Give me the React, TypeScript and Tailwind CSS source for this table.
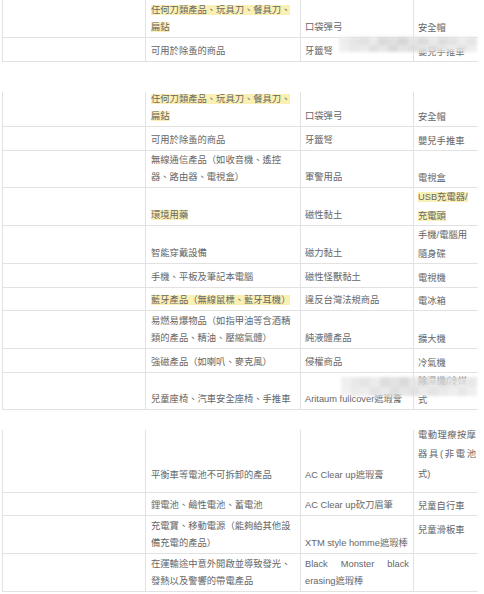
type Cell = { t: string[]; hl?: boolean; top?: boolean; j?: boolean };
type Row = { h: string; c: [Cell, Cell, Cell]; pb?: string; pb4?: string; lh4?: string };

const snippetOne: Row[] = [
  {
    h: 'h-[38px]',
    c: [{ t: ['任何刀類產品、玩具刀、餐具刀、', '扁鉆'], hl: true }, { t: ['口袋彈弓'] }, { t: ['安全帽'] }],
  },
  { h: 'h-[24px]', c: [{ t: ['可用於除蚤的商品'] }, { t: ['牙籤弩'] }, { t: ['嬰兒手推車'] }] },
];

const snippetTwo: Row[] = [
  {
    h: 'h-[35px]',
    c: [{ t: ['任何刀類產品、玩具刀、餐具刀、', '扁鉆'], hl: true }, { t: ['口袋彈弓'] }, { t: ['安全帽'] }],
  },
  { h: 'h-[24px]', c: [{ t: ['可用於除蚤的商品'] }, { t: ['牙籤弩'] }, { t: ['嬰兒手推車'] }] },
  {
    h: 'h-[37px]',
    c: [{ t: ['無線通信產品（如收音機、遙控', '器、路由器、電視盒）'] }, { t: ['軍警用品'] }, { t: ['電視盒'] }],
  },
  {
    h: 'h-[38px]',
    c: [{ t: ['環境用藥'], hl: true }, { t: ['磁性黏土'] }, { t: ['USB充電器/', '充電頭'], hl: true }],
  },
  { h: 'h-[38px]', c: [{ t: ['智能穿戴設備'] }, { t: ['磁力黏土'] }, { t: ['手機/電腦用', '隨身碟'] }] },
  { h: 'h-[24px]', c: [{ t: ['手機、平板及筆記本電腦'] }, { t: ['磁性怪獸黏土'] }, { t: ['電視機'] }] },
  {
    h: 'h-[23px]',
    c: [{ t: ['藍牙產品（無線鼠標、藍牙耳機）'], hl: true }, { t: ['違反台灣法規商品'] }, { t: ['電冰箱'] }],
  },
  {
    h: 'h-[38px]',
    c: [{ t: ['易燃易爆物品（如指甲油等含酒精', '類的產品、精油、壓縮氣體）'] }, { t: ['純液體產品'] }, { t: ['擴大機'] }],
  },
  { h: 'h-[24px]', c: [{ t: ['強磁產品（如喇叭、麥克風）'] }, { t: ['侵權商品'] }, { t: ['冷氣機'] }] },
  {
    h: 'h-[37px]',
    c: [{ t: ['兒童座椅、汽車安全座椅、手推車'] }, { t: ['Aritaum fullcover遮瑕膏'] }, { t: ['除濕機/冷媒', '式'] }],
  },
];

const snippetThree: Row[] = [
  {
    h: 'h-[63px]',
    pb: 'pb-[9px]',
    pb4: 'pb-[8px]',
    lh4: 'leading-[19.5px]',
    c: [
      { t: ['平衡車等電池不可拆卸的產品'] },
      { t: ['AC Clear up遮瑕膏'] },
      { t: ['電動理療按摩', '器具(非電池', '式)'], j: true },
    ],
  },
  { h: 'h-[23px]', c: [{ t: ['鋰電池、鹼性電池、蓄電池'] }, { t: ['AC Clear up砍刀眉筆'] }, { t: ['兒童自行車'] }] },
  {
    h: 'h-[38px]',
    c: [
      { t: ['充電寶、移動電源（能夠給其他設', '備充電的產品）'] },
      { t: ['XTM style homme遮瑕棒'] },
      { t: ['兒童滑板車'], top: true },
    ],
  },
  {
    h: 'h-[38px]',
    c: [
      { t: ['在運輸途中意外開啟並導致發光、', '發熱以及警響的帶電產品'] },
      { t: ['Black Monster black', 'erasing遮瑕棒'], j: true },
      { t: [] },
    ],
  },
];

function CellBox({ cell, box, lh, pb }: { cell: Cell; box: string; lh: string; pb: string }) {
  return (
    <div className={`flex flex-col ${cell.top ? 'justify-start pt-[5px]' : `justify-end ${pb}`} ${box}`}>
      {cell.t.map((line, i) => (
        <div
          key={i}
          className={`${lh} whitespace-nowrap ${cell.j && i < cell.t.length - 1 ? '[text-align-last:justify]' : ''}`}
        >
          {cell.hl ? <span className="bg-[#fbf0b4]">{line}</span> : line}
        </div>
      ))}
    </div>
  );
}

// pixelated blur patches that sit over part of the table
const grays1 = [
  'bg-[#ececec]', 'bg-[#e4e4e4]', 'bg-[#dedede]', 'bg-[#e8e8e8]', 'bg-[#d6d6d6]', 'bg-[#dcdcdc]',
  'bg-[#d2d2d2]', 'bg-[#e2e2e2]', 'bg-[#d8d8d8]', 'bg-[#e6e6e6]', 'bg-[#dadada]', 'bg-[#e0e0e0]',
  'bg-[#e9e9e9]', 'bg-[#e3e3e3]',
];
const grays2 = [
  'bg-[#eeeeee]', 'bg-[#e6e6e6]', 'bg-[#e9e9e9]', 'bg-[#dddddd]', 'bg-[#e4e4e4]', 'bg-[#d7d7d7]',
  'bg-[#e1e1e1]', 'bg-[#dbdbdb]', 'bg-[#e7e7e7]', 'bg-[#dedede]', 'bg-[#e5e5e5]', 'bg-[#ebebeb]',
  'bg-[#e2e2e2]', 'bg-[#ececec]',
];

function Smudge({ place }: { place: string }) {
  return (
    <div className={`pointer-events-none absolute ${place}`}>
      <div className="flex h-full w-full flex-col blur-[1.5px]">
        <div className="flex flex-1">
          {grays1.map((g, i) => (
            <div key={i} className={`flex-1 ${g}`} />
          ))}
        </div>
        <div className="flex flex-1">
          {grays2.map((g, i) => (
            <div key={i} className={`flex-1 ${g}`} />
          ))}
        </div>
      </div>
    </div>
  );
}

function Snippet({ rows, className, smudge }: { rows: Row[]; className: string; smudge?: string }) {
  return (
    <div className={`relative ml-[2px] w-[476px] border-l border-[#e2e2e2] ${className}`}>
      {rows.map((r, i) => (
        <div key={i} className={`flex border-b border-[#e2e2e2] ${r.h}`}>
          <div className="w-[143px] shrink-0 border-r border-[#e2e2e2]" />
          <CellBox
            cell={r.c[0]}
            box="w-[155px] shrink-0 border-r border-[#e2e2e2] pl-[5px] pr-[3px]"
            lh="leading-[16.5px]"
            pb={r.pb ?? 'pb-[2px]'}
          />
          <CellBox
            cell={r.c[1]}
            box="w-[113px] shrink-0 border-r border-[#e2e2e2] pl-[4px] pr-[4px]"
            lh="leading-[16.5px]"
            pb={r.pb ?? 'pb-[2px]'}
          />
          <CellBox
            cell={r.c[2]}
            box="flex-1 pl-[4px] pr-[2px]"
            lh={r.lh4 ?? 'leading-[18.5px]'}
            pb={r.pb4 ?? 'pb-[0px]'}
          />
        </div>
      ))}
      {smudge && <Smudge place={smudge} />}
    </div>
  );
}

export default function App() {
  return (
    <div className="h-[594px] w-[484px] overflow-hidden bg-white text-[9.3px] text-[#666666] [font-family:'Liberation_Sans','Noto_Sans_CJK_TC',sans-serif]">
      <Snippet rows={snippetOne} className="" smudge="left-[336px] top-[37px] h-[15px] w-[138px] opacity-90" />
      <Snippet rows={snippetTwo} className="mt-[30px]" smudge="left-[338px] top-[285px] h-[19px] w-[136px] opacity-80" />
      <Snippet rows={snippetThree} className="mt-[20px]" />
    </div>
  );
}
